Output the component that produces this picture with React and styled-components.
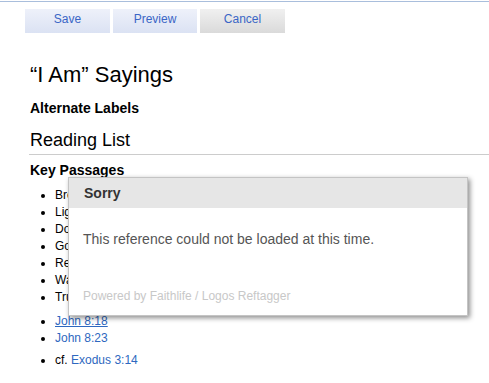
import React from "react";
import styled, { createGlobalStyle } from "styled-components";

const GlobalStyle = createGlobalStyle`
  body {
    margin: 0;
    background: #ffffff;
    font-family: "Liberation Sans", Arial, sans-serif;
    color: #000;
  }
`;

const Page = styled.div`
  position: relative;
  width: 489px;
  height: 383px;
  overflow: hidden;
  border-top: 1px solid #fff;
`;

const Toolbar = styled.div`
  display: flex;
  gap: 3px;
  padding: 7px 0 0 25px;
  border-top: 1px solid #a9bedc;
`;

const Button = styled.button`
  width: ${(p) => p.$w}px;
  height: 24px;
  border: none;
  padding: 0 0 4px;
  font-family: "Liberation Sans", Arial, sans-serif;
  font-size: 12px;
  line-height: 20px;
  color: #3a66c6;
  background: ${(p) =>
    p.$gray
      ? "linear-gradient(to bottom, #f0f0f0, #dadada)"
      : "linear-gradient(to bottom, #eef1fa, #dbe2f3)"};
  cursor: pointer;
`;

const Content = styled.div`
  padding-left: 30px;
`;

const Title = styled.h1`
  margin: 29px 0 0;
  font-size: 22px;
  line-height: 26px;
  font-weight: normal;
`;

const Label = styled.h3`
  margin: ${(p) => p.$top}px 0 0;
  font-size: 14px;
  line-height: 18px;
  font-weight: bold;
`;

const Section = styled.h2`
  margin: 12px 0 0 -1px;
  padding: 0 0 3px 1px;
  font-size: 18px;
  line-height: 22px;
  font-weight: normal;
  border-bottom: 1px solid #cccccc;
`;

const List = styled.ul`
  margin: ${(p) => p.$top}px 0 0;
  padding-left: 25px;
  font-size: 12px;
  line-height: 17px;
  list-style: disc;
`;

const Item = styled.li`
  white-space: nowrap;
`;

const Ref = styled.a`
  color: #2e68c0;
  text-decoration: ${(p) => (p.$hover ? "underline" : "none")};
`;

const Popup = styled.div`
  position: absolute;
  left: 68px;
  top: 176px;
  width: 398px;
  height: 137px;
  background: #fff;
  border: 1px solid #c4c4c4;
  box-shadow: 2px 2px 5px rgba(0, 0, 0, 0.45);
  display: flex;
  flex-direction: column;
`;

const PopupHeader = styled.div`
  height: 30px;
  padding: 0 15px;
  background: #e6e6e6;
  display: flex;
  align-items: center;
  font-size: 14px;
  font-weight: bold;
  color: #333;
`;

const PopupBody = styled.div`
  padding: 22px 14px 0;
  font-size: 14px;
  line-height: 18px;
  color: #555;
`;

const PopupFooter = styled.div`
  margin-top: auto;
  padding: 0 14px 11px;
  font-size: 12px;
  line-height: 16px;
  color: #c8c8c8;
`;

const passages = [
  "Bread of Life",
  "Light of the World",
  "Door of the Sheep",
  "Good Shepherd",
  "Resurrection and the Life",
  "Way, the Truth, and the Life",
  "True Vine",
];

export default function App() {
  return (
    <>
      <GlobalStyle />
      <Page>
        <Toolbar>
          <Button $w={85}>Save</Button>
          <Button $w={84}>Preview</Button>
          <Button $w={85} $gray>
            Cancel
          </Button>
        </Toolbar>
        <Content>
          <Title>“I Am” Sayings</Title>
          <Label $top={11}>Alternate Labels</Label>
          <Section>Reading List</Section>
          <Label $top={6}>Key Passages</Label>
          <List $top={8}>
            {passages.map((p) => (
              <Item key={p}>{p}</Item>
            ))}
          </List>
          <List $top={7}>
            <Item>
              <Ref href="#" $hover>
                John 8:18
              </Ref>
            </Item>
            <Item>
              <Ref href="#">John 8:23</Ref>
            </Item>
          </List>
          <List $top={5}>
            <Item>
              cf. <Ref href="#">Exodus 3:14</Ref>
            </Item>
          </List>
        </Content>
        <Popup>
          <PopupHeader>Sorry</PopupHeader>
          <PopupBody>This reference could not be loaded at this time.</PopupBody>
          <PopupFooter>Powered by Faithlife / Logos Reftagger</PopupFooter>
        </Popup>
      </Page>
    </>
  );
}
